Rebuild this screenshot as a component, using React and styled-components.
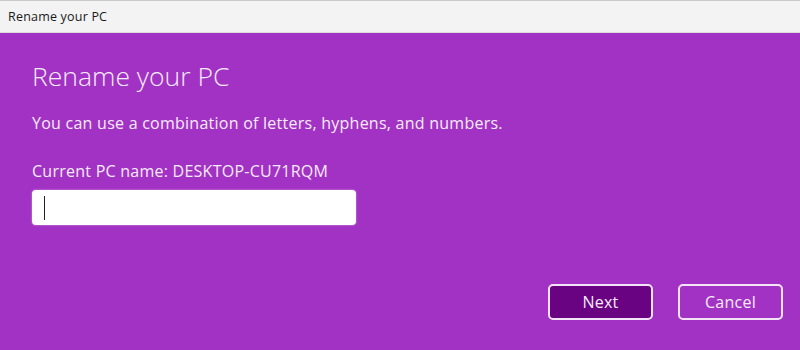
import styled, { createGlobalStyle } from "styled-components";

const GlobalStyle = createGlobalStyle`
  html, body {
    margin: 0;
    padding: 0;
    background: #a232c4;
  }
  body {
    font-family: "Open Sans", "Noto Sans", "Liberation Sans", sans-serif;
  }
`;

const Window = styled.div`
  width: 800px;
  height: 350px;
  display: flex;
  flex-direction: column;
  background: #a232c4;
  overflow: hidden;
`;

const TitleBar = styled.div`
  height: 33px;
  flex: none;
  display: flex;
  align-items: center;
  padding: 0 8px 1px;
  box-sizing: border-box;
  background: #f3f3f3;
  border-top: 1px solid #c9c9c9;
  border-bottom: 1px solid #dcdcdc;
  color: #1a1a1a;
  font-size: 12.5px;
  letter-spacing: 0.2px;
`;

const Body = styled.div`
  flex: 1;
  display: flex;
  flex-direction: column;
  padding: 25px 32px 0 32px;
  color: #f6ecf9;
`;

const Heading = styled.h1`
  margin: 0;
  font-size: 26.5px;
  font-weight: 300;
  line-height: 36px;
`;

const Text = styled.p`
  margin: ${(p) => p.$mt || 0}px 0 0 0;
  font-size: 16px;
  line-height: 20px;
  letter-spacing: 0.25px;
`;

const NameInput = styled.div`
  margin-top: 9px;
  width: 324px;
  height: 35px;
  box-sizing: border-box;
  background: #ffffff;
  border-radius: 4px;
  box-shadow: 0 0 2px rgba(255, 255, 255, 0.6);
  display: flex;
  align-items: center;
  padding-left: 12px;
`;

const Caret = styled.span`
  width: 1px;
  height: 24px;
  background: #222;
`;

const Actions = styled.div`
  margin-top: auto;
  margin-bottom: 30px;
  display: flex;
  justify-content: flex-end;
  gap: 25px;
  padding-right: 17px;
  margin-right: -32px;
`;

const Button = styled.button`
  width: 105px;
  height: 36px;
  box-sizing: border-box;
  border: 2px solid #f4e4f8;
  border-radius: 5px;
  background: ${(p) => (p.$primary ? "#6a0382" : "transparent")};
  color: #f6ecf9;
  font-family: inherit;
  font-size: 16px;
  letter-spacing: 0.25px;
  cursor: pointer;
`;

export default function App() {
  return (
    <Window>
      <GlobalStyle />
      <TitleBar>Rename your PC</TitleBar>
      <Body>
        <Heading>Rename your PC</Heading>
        <Text $mt={19}>
          You can use a combination of letters, hyphens, and numbers.
        </Text>
        <Text $mt={28}>Current PC name: DESKTOP-CU71RQM</Text>
        <NameInput>
          <Caret />
        </NameInput>
        <Actions>
          <Button $primary>Next</Button>
          <Button>Cancel</Button>
        </Actions>
      </Body>
    </Window>
  );
}
